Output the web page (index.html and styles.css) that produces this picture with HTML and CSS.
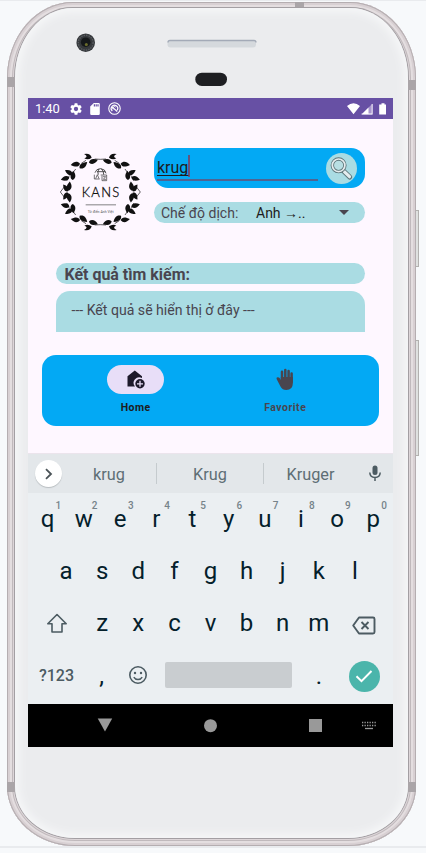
FILE: index.html
```html
<!DOCTYPE html>
<html lang="vi">
<head>
<meta charset="utf-8">
<title>KANS</title>
<link rel="stylesheet" href="styles.css">
</head>
<body>
<div class="stage">
<div class="phone">
  <i class="band band-tl"></i><i class="band band-bl"></i><i class="band band-top"></i><i class="band band-tr"></i><i class="band band-br"></i>
  <i class="side power"></i><i class="side volume"></i>
  <div class="face">
    <svg class="hardware" viewBox="28 8 365 90">
      <circle cx="85.7" cy="42.7" r="9.3" fill="#36393c"/>
      <circle cx="85.7" cy="42.7" r="7.4" fill="none" stroke="#585b60" stroke-width="1.4" stroke-dasharray="1.5 1"/>
      <circle cx="85.7" cy="42.2" r="4.8" fill="#15181a"/>
      <circle cx="86.3" cy="44.5" r="1.5" fill="#6b6c2c"/>
      <rect x="167.500" y="40" width="88.500" height="7.500" rx="3" fill="#d5d9dd"/>
      <path d="M168 42.500q0-2 2-2h84q2 0 2 2" fill="none" stroke="#a3aab7" stroke-width="1.300"/>
      <rect x="195.300" y="72.700" width="31.700" height="13.300" rx="6.500" fill="#1e1f22"/>
    </svg>
    <div class="screen">
      <header class="status">
        <span class="clock">1:40</span>
        <svg class="ic-gear" viewBox="2 2 20 20"><path fill="#fff" d="M19.140 12.940a7 7 0 0 0 0-1.880l2.030-1.580a.5.5 0 0 0 .12-.61l-1.920-3.320a.5.5 0 0 0-.59-.22l-2.390.96a7 7 0 0 0-1.620-.94l-.36-2.540a.5.5 0 0 0-.48-.41h-3.840a.5.5 0 0 0-.47.41l-.36 2.540a7 7 0 0 0-1.620.94l-2.390-.96a.5.5 0 0 0-.59.22L2.740 8.870a.5.5 0 0 0 .12.61l2.030 1.580a7 7 0 0 0 0 1.880l-2.030 1.580a.5.5 0 0 0-.12.61l1.920 3.320a.5.5 0 0 0 .59.22l2.390-.96a7 7 0 0 0 1.620.94l.36 2.540a.5.5 0 0 0 .48.41h3.840a.5.5 0 0 0 .47-.41l.36-2.540a7 7 0 0 0 1.620-.94l2.390.96a.5.5 0 0 0 .59-.22l1.920-3.320a.5.5 0 0 0-.12-.61zM12 15.600a3.600 3.600 0 1 1 0-7.200 3.600 3.600 0 0 1 0 7.200z"/></svg>
        <svg class="ic-sd" viewBox="4 2 16 20"><path fill="#fff" d="M18 2h-8L4 8v12a2 2 0 0 0 2 2h12a2 2 0 0 0 2-2V4a2 2 0 0 0-2-2zm-6 6h-2V4h2zm3 0h-2V4h2zm3 0h-2V4h2z"/></svg>
        <svg class="ic-app" viewBox="0 0 24 24" fill="none" stroke="#fff"><circle cx="12" cy="12" r="10.600" stroke-width="2"/><path d="M8 16.500a6 6 0 1 1 9-1.500M7 8.500l10 9" stroke-width="2.200"/><path d="M9.500 13.500a3 3 0 0 1 4.500-4" stroke-width="1.800"/></svg>
        <svg class="ic-net" viewBox="0 0 39 12"><path fill="#fff" d="M0 3Q6.500-2.400 13 3L6.500 11.300zM33 1.500h1.500V.2h3v1.300H39v10h-6.800v-10z"/><path fill="#a996cf" d="M14.500 11.500L25.300.7v10.800z"/><path fill="#fff" d="M14.500 11.500L21.500 4.500v7zM24.700.9h.9v10.600h-11v-1.100h10.100z"/></svg>
      </header>

      <main class="app">
        <section class="top">
          <svg class="logo" viewBox="96 98 243 234">
            <defs>
              <path id="leaf" d="M0 0C5-10 15-9 28 0C17 9 7 10 0 0z"/>
              <g id="quarter">
                <path d="M97 215l14-18M116 182l8-16M133 160l10-14M160 129l14-9M200 116l17 1" fill="none" stroke="#111" stroke-width="2"/>
                <use href="#leaf" transform="translate(120 213) rotate(-125) scale(.9)"/>
                <use href="#leaf" transform="translate(122 211) rotate(-83)"/>
                <use href="#leaf" transform="translate(124 171) rotate(164) scale(.95)"/>
                <use href="#leaf" transform="translate(134 179) rotate(-86)"/>
                <use href="#leaf" transform="translate(134 163) rotate(-150) scale(.95)"/>
                <use href="#leaf" transform="translate(156 130) rotate(172)"/>
                <use href="#leaf" transform="translate(155 144) rotate(-40) scale(1.05)"/>
                <use href="#leaf" transform="translate(183 127) rotate(-18)"/>
                <path d="M168 101Q187 97 191 112Q180 120 169 114Q183 109 168 101z"/>
              </g>
            </defs>
            <g fill="#111">
              <use href="#quarter"/>
              <use href="#quarter" transform="translate(434 0) scale(-1 1)"/>
              <use href="#quarter" transform="translate(0 430) scale(1 -1)"/>
              <use href="#quarter" transform="translate(434 430) scale(-1 -1)"/>
            </g>
            <g fill="none" stroke="#333" stroke-width="2.500">
              <path d="M201 157q3-12 17-12 14 1 16 14M207 154h25M213 145q-6 10-2 18M220 145q8 8 7 18"/>
              <path d="M199 163v13h16M203 175l5-12 5 12M218 164h18v17h-14v-15M225 169h8l-7 8h8" stroke-width="2"/>
            </g>
            <text x="161" y="231" textLength="113" lengthAdjust="spacing" class="brand">KANS</text>
            <path d="M173 253.500h91" stroke="#555" stroke-width="2.200"/>
            <text x="179" y="277" textLength="78" lengthAdjust="spacingAndGlyphs" class="tagline">Từ điển Anh Việt</text>
          </svg>
          <div class="controls">
            <div class="search">
              <div class="field"><span class="typed">krug</span></div>
              <div class="find">
                <svg viewBox="0 0 31 31"><path d="M17 17.500L23.700 24" stroke="#5c7478" stroke-width="5" stroke-linecap="round"/><path d="M18.500 18.800L23.500 23.700" stroke="#e4ecee" stroke-width="3.200" stroke-linecap="round"/><circle cx="12.600" cy="12.300" r="6.300" fill="#b8dfe3" stroke="#5c7478" stroke-width="3.400"/><circle cx="12.600" cy="12.300" r="6.300" fill="none" stroke="#e4ecee" stroke-width="1.700"/></svg>
              </div>
            </div>
            <div class="mode"><span class="mode-label">Chế độ dịch:</span><span class="mode-value">Anh →..</span><i class="caret"></i></div>
          </div>
        </section>
        <h1 class="results-title">Kết quả tìm kiếm:</h1>
        <div class="results">--- Kết quả sẽ hiển thị ở đây ---</div>
        <nav class="tabs">
          <div class="tab active">
            <span class="pill"><svg width="18" height="19" viewBox="0 0 18 19"><path fill="#1d192b" d="M.5 6.200L7.800.5 15 6.200V8A5.600 5.600 0 0 0 8 16.500H.5z"/><circle cx="13" cy="13.800" r="4.700" fill="#1d192b"/><path d="M13 10.800v6M10 13.800h6" stroke="#e8def8" stroke-width="1.300"/></svg></span>
            <b>Home</b>
          </div>
          <div class="tab">
            <span class="pill"><svg width="18" height="23" viewBox="0 0 18 23"><path d="M6 12V3.700M9.300 12V1.900M12.600 12V3M15.600 14V5.500" stroke="#49454f" stroke-width="2.500" stroke-linecap="round"/><path fill="#49454f" d="M4.800 9h12v6.500q0 6.500-6.500 6.500-4 0-5.800-3.500L.6 11q-.5-1.500 1-1.800 1.200-.2 2 .9l1.200 2z"/></svg></span>
            <b>Favorite</b>
          </div>
        </nav>
      </main>

      <section class="keyboard">
        <div class="suggest">
          <span class="more"><svg width="10" height="12" viewBox="0 0 10 12"><path d="M2 1.200L7 6 2 10.800" fill="none" stroke="#4a5357" stroke-width="1.800"/></svg></span>
          <span class="word">krug</span><span class="word">Krug</span><span class="word">Kruger</span>
          <svg class="mic" width="12" height="17" viewBox="0 0 12 17"><rect x="3.500" y=".5" width="5" height="9.500" rx="2.500" fill="#4c5b62"/><path d="M.8 7.500Q1 12.500 6 12.500t5.200-5M6 12.500V16" fill="none" stroke="#4c5b62" stroke-width="1.500"/></svg>
        </div>
        <div class="row row1"><span>q<sup>1</sup></span><span>w<sup>2</sup></span><span>e<sup>3</sup></span><span>r<sup>4</sup></span><span>t<sup>5</sup></span><span>y<sup>6</sup></span><span>u<sup>7</sup></span><span>i<sup>8</sup></span><span>o<sup>9</sup></span><span>p<sup>0</sup></span></div>
        <div class="row row2"><span>a</span><span>s</span><span>d</span><span>f</span><span>g</span><span>h</span><span>j</span><span>k</span><span>l</span></div>
        <div class="row row3">
          <span><svg width="22" height="21" viewBox="0 0 22 21"><path d="M11 1.500L1.800 10.800H6V19h10v-8.200h4.200z" fill="none" stroke="#4c5b62" stroke-width="1.600" stroke-linejoin="round"/></svg></span>
          <span>z</span><span>x</span><span>c</span><span>v</span><span>b</span><span>n</span><span>m</span>
          <span><svg class="erase" width="24" height="19" viewBox="0 0 24 19"><path d="M7 1.500h14q1.500 0 1.500 1.500v13q0 1.500-1.500 1.500H7L1.200 9.500z" fill="none" stroke="#4c5b62" stroke-width="1.900" stroke-linejoin="round"/><path d="M9.500 6l7 7M16.500 6l-7 7" stroke="#4c5b62" stroke-width="1.900"/></svg></span>
        </div>
        <div class="row row4">
          <span class="sym">?123</span><span>,</span>
          <span><svg class="smile" width="20" height="20" viewBox="0 0 20 20"><circle cx="10" cy="10" r="8.200" fill="none" stroke="#4c5b62" stroke-width="1.600"/><circle cx="7" cy="8" r="1.200" fill="#4c5b62"/><circle cx="13" cy="8" r="1.200" fill="#4c5b62"/><path d="M5.800 12.200q1.300 2.300 4.200 2.300t4.200-2.300" fill="none" stroke="#4c5b62" stroke-width="1.500"/></svg></span>
          <i class="space"></i><span>.</span>
          <span class="enter"><svg width="18" height="14" viewBox="0 0 18 14"><path d="M1.500 7.200l5 5L16.500 2" fill="none" stroke="#fff" stroke-width="2"/></svg></span>
        </div>
      </section>
      <footer class="system">
        <svg viewBox="28 704 365 43"><path fill="#999" d="M97.700 718.500h14.500L105 731.500z"/><circle cx="210.500" cy="725.700" r="6.500" fill="#999"/><path fill="#999" d="M309 719h13v13h-13z"/><path d="M362 722.500h14M362 725.500h14" stroke="#999" stroke-width="1.300" stroke-dasharray="1.300 1.200"/><path d="M365 728.500h8" stroke="#999" stroke-width="1.300"/></svg>
      </footer>
    </div>
  </div>
</div>
</div>
</body>
</html>
```
FILE: styles.css
```css
* { box-sizing: border-box; }
body { margin: 0; background: #f7f9fb; font-family: Roboto, "Noto Sans", sans-serif; }
svg { display: block; }
.stage { height: 853px; padding: 2px 0 0 7px; overflow: hidden; background: linear-gradient(#e9ebee 1px, transparent 1px, transparent 846px, #e9ebee 846px, #e9ebee 848px, transparent 848px); }

/* Handset body */
.phone {
  position: relative; width: 409px; height: 844px; padding: 6px 8px 8px 8px;
  border-radius: 66px 66px 68px 68px / 76px 76px 60px 60px;
  background: #ddd6d9;
  box-shadow: inset 0 0 0 1px #b5aeb1, inset 0 0 0 3px #d8d0d3, inset 0 0 0 5px #e4dee0, inset 0 0 0 6px #c0b9bc, inset 0 -3px 2px #a59b9f;
}
.face {
  height: 830px; padding: 0 13px;
  border-radius: 58px 58px 60px 60px / 70px 70px 52px 52px;
  background: #ebecee;
  box-shadow: 0 0 0 1px #a39fa3, inset 0 0 9px 4px #f6f7f8;
}
.hardware { width: 365px; height: 90px; }
.band { position: absolute; width: 8px; height: 10px; background: #aaa5a8; }
.band-tl { left: 0; top: 75px; }
.band-bl { left: 0; top: 780px; }
.band-top { left: 288px; top: 0; width: 9px; height: 5px; }
.band-tr { right: 0; top: 78px; }
.band-br { right: 0; top: 780px; }
.side { position: absolute; left: 409px; width: 3px; background: #dfe1e0; border: 1px solid #b2b1af; border-left: 0; }
.power { top: 208px; height: 57px; }
.volume { top: 338px; height: 116px; }

.screen { display: flex; flex-direction: column; width: 365px; height: 649px; background: #fef7ff; }
.status { display: flex; align-items: center; height: 21px; padding: 0 7px 0 7px; background: #6750a4; color: #fff; }
.clock { width: 34px; font-size: 13px; line-height: 21px; letter-spacing: -.1px; }
.ic-gear { width: 12px; height: 12px; margin-left: 1px; }
.ic-sd { width: 10px; height: 12px; margin-left: 8px; }
.ic-app { width: 13px; height: 13px; margin-left: 8px; }
.ic-net { width: 39px; height: 12px; margin-left: auto; }

/* Dictionary app */
.app { height: 335px; padding: 29px 14px 0; border-bottom: 1px solid #ebe4ec; }
.top { display: flex; padding: 0 14px 0 18px; }
.logo { width: 81px; height: 78px; margin-top: 5px; }
.brand { font: 300 39px Lato, sans-serif; fill: #111; stroke: #111; stroke-width: .9px; }
.tagline { font: 11px Roboto, sans-serif; fill: #555; }
.controls { width: 211px; margin-left: 13px; }
.search { display: flex; align-items: center; justify-content: space-between; height: 40px; padding: 0 8px 0 3px; border-radius: 14px; background: #03a9f4; }
.field { width: 161px; height: 26px; border-bottom: 2px solid #4f6593; }
.typed { display: inline-block; height: 22px; padding-top: 3px; font-size: 16px; line-height: 20px; color: #1d1b20; border-right: 2px solid #67547c; text-decoration: underline; text-decoration-thickness: 1px; text-underline-offset: 2px; text-decoration-skip-ink: none; }
.find { width: 31px; height: 31px; border-radius: 50%; background: #aadce3; }
.mode { display: flex; align-items: center; height: 21px; margin-top: 14px; padding: 0 16px 0 7px; border-radius: 11px; background: #aadce3; font-size: 14px; color: #49454f; }
.mode-label { width: 95px; }
.mode-value { color: #1d1b20; white-space: nowrap; }
.caret { margin-left: auto; border: 5px solid transparent; border-top-color: #49454f; border-bottom: 0; }
.results-title { height: 21px; margin: 32px 14px 0; padding-left: 8.500px; border-radius: 11px; background: #aadce3; font-size: 15.950px; font-weight: 700; line-height: 23px; color: #49454f; }
.results { height: 41px; margin: 7px 14px 0; padding: 0 15.500px; border-radius: 14px 14px 0 0; background: #aadce3; font-size: 14.100px; line-height: 39px; color: #49454f; }
.tabs { display: flex; justify-content: center; height: 71px; margin-top: 22.500px; padding: 10.500px 19px; border-radius: 14px; background: #03a9f4; }
.tab { display: flex; flex-direction: column; align-items: center; width: 149.500px; color: #49454f; }
.pill { display: grid; place-items: center; width: 57px; height: 29px; border-radius: 15px; }
.active .pill { background: #e8def8; }
.tab b { margin-top: 7px; font-size: 10.500px; line-height: 14px; font-weight: 700; letter-spacing: .5px; }
.active { color: #1d1b20; }

/* Keyboard */
.keyboard { height: 250px; background: #ebeff2; color: #04202b; }
.suggest { display: flex; align-items: center; height: 39px; padding: 0 12px 0 7px; background: #e3e7ea; }
.more { display: grid; place-items: center; width: 27px; height: 27px; border-radius: 50%; background: #fff; box-shadow: 0 1px 1px #b8bdc0; }
.word { width: 107px; height: 21px; line-height: 23px; font-size: 16.300px; text-align: center; color: #5e6e75; border-left: 1px solid #c5cbce; }
.more + .word { width: 94px; border-left: 0; }
.word:last-of-type { width: 94px; }
.mic { margin-left: auto; }
.row { display: grid; justify-content: center; align-items: center; height: 52px; font-size: 24px; line-height: 28px; text-align: center; }
.row span { display: flex; position: relative; justify-content: center; }
.row1 { grid-template-columns: repeat(10, 36.200px); }
.row2 { grid-template-columns: repeat(9, 36.100px); }
.row3 { grid-template-columns: 54px repeat(7, 36.100px) 54px; }
.row3 span, .row4 span { align-items: center; }
.row4 { grid-template-columns: 54px 36px 36px 136.500px 54px 36px; justify-content: start; height: 54px; padding-left: 1.500px; }
.erase { margin-top: 4px; }
.smile { margin-top: -2px; }
.row sup { position: absolute; left: 26px; top: -5px; font-size: 10px; line-height: 12px; font-weight: 500; color: #76838a; }
.row .sym { font-size: 16px; font-weight: 500; color: #4c5b62; }
.space { height: 26px; margin: -2px 0 0 9.500px; border-radius: 2px; background: #c9cdd0; }
.row .enter { justify-self: center; width: 31px; height: 31px; border-radius: 50%; background: #4bb5ab; }
.system { height: 43px; background: #000; }
```
